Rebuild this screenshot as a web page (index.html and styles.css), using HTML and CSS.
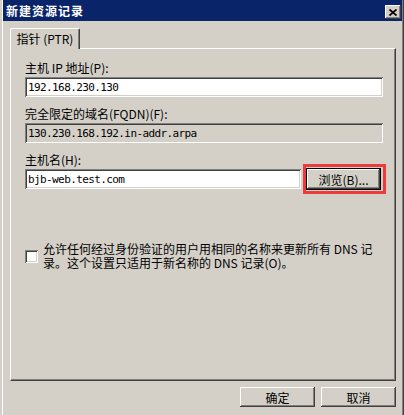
FILE: index.html
```html
<!DOCTYPE html>
<html lang="zh-CN">
<head>
    <meta charset="UTF-8">
    <meta name="viewport" content="width=device-width, initial-scale=1.0">
    <title>新建资源记录</title>
    <link rel="stylesheet" href="styles.css">
</head>
<body>
    <div class="dialog">
        <div class="titlebar">
            <span class="title">新建资源记录</span>
            <button class="close" aria-label="关闭">
                <svg width="8" height="7" viewBox="0 0 8 7"><path d="M0.5 0.5 L7.5 6.5 M7.5 0.5 L0.5 6.5" stroke="#000" stroke-width="1.7" fill="none"/></svg>
            </button>
        </div>

        <div class="tabs">
            <div class="tab">指针 (PTR)</div>
        </div>

        <div class="panel">
            <div class="group">
                <label class="label" for="ip">主机 IP 地址(P):</label>
                <input class="edit" id="ip" type="text" value="192.168.230.130">
            </div>
            <div class="group">
                <label class="label" for="fqdn">完全限定的域名(FQDN)(F):</label>
                <input class="edit readonly" id="fqdn" type="text" value="130.230.168.192.in-addr.arpa" readonly>
            </div>
            <div class="group">
                <label class="label" for="host">主机名(H):</label>
                <div class="host-row">
                    <input class="edit host" id="host" type="text" value="bjb-web.test.com">
                    <div class="browse-wrap">
                        <button class="btn default">浏览(B)...</button>
                        <span class="highlight"></span>
                    </div>
                </div>
            </div>
            <div class="check-row">
                <input class="check" type="checkbox" id="update">
                <label class="check-text" for="update">允许任何经过身份验证的用户用相同的名称来更新所有 DNS 记<br>录。这个设置只适用于新名称的 DNS 记录(O)。</label>
            </div>
        </div>

        <div class="actions">
            <button class="btn">确定</button>
            <button class="btn">取消</button>
        </div>
    </div>
</body>
</html>
```

FILE: styles.css
```css
* {
    box-sizing: border-box;
}

html, body {
    margin: 0;
}

body {
    background: #d4d0c8;
    font-family: "Noto Sans CJK SC", sans-serif;
    font-size: 12px;
    color: #000;
    height: 415px;
    overflow: hidden;
}

.dialog {
    margin-left: 2px;
    width: 401px;
    height: 415px;
    border-left: 1px solid #fff;
    border-right: 1px solid #808080;
    box-shadow: 1px 0 0 #404040;
    display: flex;
    flex-direction: column;
}

.titlebar {
    height: 21px;
    background: #0a246a;
    display: flex;
    align-items: center;
    justify-content: space-between;
    padding: 0 1px 0 3px;
}

.title {
    color: #fff;
    font-weight: bold;
    letter-spacing: 1px;
    line-height: 14px;
}

.close {
    width: 16px;
    height: 14px;
    margin-top: 3px;
    padding: 0;
    border: none;
    background: #d4d0c8;
    display: flex;
    align-items: center;
    justify-content: center;
    box-shadow: inset -1px -1px #404040, inset 1px 1px #fff, inset -2px -2px #808080;
}

.tabs {
    padding: 7px 0 0 7px;
    display: flex;
}

.tab {
    position: relative;
    z-index: 1;
    width: 70px;
    height: 21px;
    margin-bottom: -1px;
    background: #d4d0c8;
    border-left: 1px solid #fff;
    border-top: 1px solid #fff;
    border-right: 1px solid #404040;
    border-top-left-radius: 2px;
    border-top-right-radius: 2px;
    box-shadow: inset -1px 0 #808080;
    text-align: center;
    line-height: 19px;
}

.panel {
    margin: 0 6px 0 7px;
    height: 333px;
    border-left: 1px solid #fff;
    border-top: 1px solid #fff;
    border-right: 1px solid #404040;
    border-bottom: 1px solid #404040;
    box-shadow: inset -1px -1px #808080;
    padding: 12px 12px 0 14px;
}

.group + .group {
    margin-top: 10px;
}

.label {
    display: block;
    line-height: 14px;
    margin-bottom: 2px;
}

.edit {
    display: block;
    width: 100%;
    height: 20px;
    margin: 0;
    padding: 0 2px 0 3px;
    border: none;
    outline: none;
    background: #fff;
    font-family: "DejaVu Sans Mono", monospace;
    font-size: 11px;
    letter-spacing: -0.6px;
    color: #000;
    box-shadow: inset 1px 1px #808080, inset -1px -1px #fff, inset 2px 2px #404040, inset -2px -2px #d4d0c8;
}

.edit.readonly {
    background: #d4d0c8;
}

.host-row {
    display: flex;
    align-items: center;
    gap: 5px;
    height: 20px;
}

.edit.host {
    width: 276px;
}

.browse-wrap {
    position: relative;
}

.btn {
    width: 75px;
    height: 20px;
    padding: 0;
    border: none;
    background: #d4d0c8;
    font-family: "Noto Sans CJK SC", sans-serif;
    font-size: 12px;
    color: #000;
    box-shadow: inset -1px -1px #404040, inset 1px 1px #fff, inset -2px -2px #808080;
}

.btn.default {
    display: block;
    height: 22px;
    margin: -1px 0;
    border: 1px solid #000;
}

.highlight {
    position: absolute;
    top: -5px;
    left: -3px;
    right: -5px;
    bottom: -5px;
    border: 3px solid #ef3a3c;
    pointer-events: none;
}

.check-row {
    display: flex;
    align-items: center;
    gap: 5px;
    margin-top: 53px;
}

.check {
    appearance: none;
    width: 13px;
    height: 13px;
    margin: 0;
    background: #fff;
    box-shadow: inset 1px 1px #808080, inset -1px -1px #fff, inset 2px 2px #404040, inset -2px -2px #d4d0c8;
}

.check-text {
    line-height: 14px;
    white-space: nowrap;
}

.actions {
    display: flex;
    justify-content: flex-end;
    gap: 6px;
    padding: 6px 6px 0 0;
}
```
